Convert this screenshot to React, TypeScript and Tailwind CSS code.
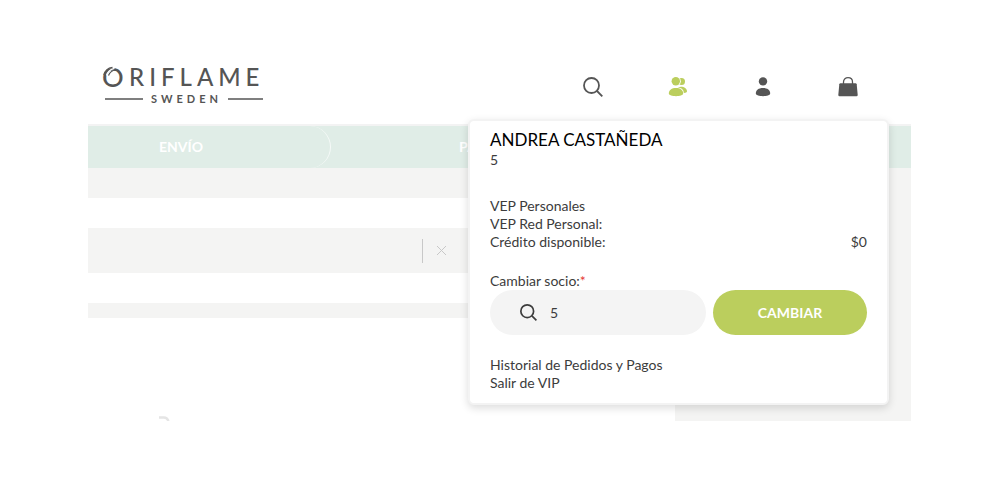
import React from "react";

function Logo() {
  return (
    <a href="#inicio" aria-label="Oriflame Sweden" className="block">
      <svg width="164" height="40" viewBox="0 0 164 40" className="overflow-visible fill-[#555555] font-['Lato',sans-serif]">
        <text x="-1" y="20" className="text-[27px] font-medium">O</text>
        <path d="M.8 8C2 3.500 5 .8 9.500 .3" fill="none" stroke="#555555" strokeWidth="1.200" />
        <path d="M3.500 8.500C4.500 4.500 7 2.300 11.500 1.300" fill="none" stroke="#fff" strokeWidth="1.200" />
        <path d="M5.500 8.500C6.500 5.500 9 3.500 12.500 3" fill="none" stroke="#555555" strokeWidth="1.200" />
        <text x="26" y="19" className="text-2xl font-medium tracking-[5px]">RIFLAME</text>
        <path d="M2 32H40M125 32H160" stroke="#555555" strokeWidth="1.500" />
        <text x="48" y="36" className="text-[11px] font-bold tracking-[4px]">SWEDEN</text>
      </svg>
    </a>
  );
}

function SearchIcon({ className }: { className: string }) {
  return (
    <svg viewBox="0 0 20 20" className={className} fill="none" stroke="currentColor" aria-hidden="true">
      <circle cx="8.500" cy="8.500" r="7.500" />
      <path d="M14 14L19.300 19.300" />
    </svg>
  );
}

function Header() {
  return (
    <header className="flex h-[69px] items-start border-b-2 border-[#f3f3f3] pl-[15px] pt-[10px]">
      <Logo />
      <nav aria-label="Cuenta" className="ml-auto mr-[53px] flex pt-[10px] text-[#555555]">
        <button aria-label="Buscar" className="w-5">
          <SearchIcon className="size-5 stroke-[1.8]" />
        </button>
        <button aria-label="Cambiar socio" className="ml-[65px] w-5 text-[#bbce5d]">
          <svg width="20" height="20" viewBox="0 0 20 20" fill="currentColor" aria-hidden="true">
            <circle cx="13.500" cy="4.500" r="3.500" />
            <path d="M10 10.500C14 8.500 19 11 19 14.500C19 15.800 16.500 16 14 16Z" />
            <circle cx="7.800" cy="4.200" r="5" fill="#fff" />
            <circle cx="7.800" cy="4.200" r="4.200" />
            <path d="M.8 16.500C.8 13 3.800 11 8 11S15.200 13 15.200 16.500C15.200 20 .8 20 .8 16.500Z" fill="#fff" stroke="#fff" strokeWidth="1.400" />
            <path d="M.8 16.500C.8 13 3.800 11 8 11S15.200 13 15.200 16.500C15.200 20 .8 20 .8 16.500Z" />
          </svg>
        </button>
        <button aria-label="Mi cuenta" className="ml-[65px] w-5">
          <svg width="20" height="20" viewBox="0 0 20 20" fill="currentColor" aria-hidden="true">
            <circle cx="10" cy="4.400" r="4.200" />
            <path d="M2.800 16.500C2.800 13.200 5.500 11 10 11S17.200 13.200 17.200 16.500C17.200 20 2.800 20 2.800 16.500Z" />
          </svg>
        </button>
        <button aria-label="Bolsa" className="ml-[65px] w-5">
          <svg width="20" height="20" viewBox="0 0 20 20" fill="currentColor" aria-hidden="true">
            <path d="M5.500 7V5C5.500-.8 14.500-.8 14.500 5V7" fill="none" stroke="currentColor" strokeWidth="1.300" />
            <path d="M2.500 6.200H17.500Q18.500 6.200 18.700 7.200L19.700 18Q19.700 19.200 18.500 19.200H1.500Q.3 19.200 .3 18L1.300 7.200Q1.500 6.200 2.500 6.200Z" />
          </svg>
        </button>
      </nav>
    </header>
  );
}

function AccountMenu() {
  return (
    <section
      aria-label="Cuenta de socio"
      className="absolute right-[22px] top-[62px] w-[421px] rounded-md border-2 border-[#f3f3f3] bg-white px-5 pb-[11px] pt-2 text-sm leading-[18px] text-[#3c3c3c] shadow-[0_3px_8px_rgba(0,0,0,0.14)]"
    >
      <h2 className="text-[17px] leading-[22px] text-black">ANDREA CASTAÑEDA</h2>
      <p>5</p>
      <dl className="mt-7">
        <div className="flex justify-between"><dt>VEP Personales</dt><dd /></div>
        <div className="flex justify-between"><dt>VEP Red Personal:</dt><dd /></div>
        <div className="flex justify-between"><dt>Crédito disponible:</dt><dd>$0</dd></div>
      </dl>
      <form className="mt-[21px]" onSubmit={(e) => e.preventDefault()}>
        <label htmlFor="socio" className="block">
          Cambiar socio:<span className="text-[#e53935]">*</span>
        </label>
        <div className="flex gap-[7px]">
          <div className="flex h-[45px] min-w-0 flex-1 items-center gap-[13px] rounded-full bg-[#f4f4f4] pl-[30px] pr-5">
            <SearchIcon className="size-[17px] shrink-0 stroke-2" />
            <input id="socio" defaultValue="5" className="min-w-0 flex-1 bg-transparent outline-none" />
          </div>
          <button className="h-[45px] w-[154px] rounded-full bg-[#bbce5d] font-bold text-white">CAMBIAR</button>
        </div>
      </form>
      <ul className="mt-[21px]">
        <li><a href="#historial">Historial de Pedidos y Pagos</a></li>
        <li><a href="#salir">Salir de VIP</a></li>
      </ul>
    </section>
  );
}

export default function App() {
  return (
    <div className="bg-white pb-[57px] pl-[88px] pr-[89px] pt-[57px] font-['Lato',sans-serif]">
      <div className="relative">
        <Header />
        <ol className="flex h-[42px] bg-[#e0ede7] text-sm font-bold leading-[42px] text-white">
          <li className="w-[243px] rounded-r-full border-r border-white/70 pl-[71px]">ENVÍO</li>
          <li className="pl-32">PA</li>
        </ol>
        <main className="flex">
          <div className="flex min-w-0 flex-1 flex-col">
            <div className="h-[30px] bg-[#f4f4f3]" />
            <div className="mt-[30px] flex h-[45px] items-center bg-[#f4f4f3]">
              <div className="ml-[334px] h-6 w-px bg-[#c8c8c8]" />
              <button aria-label="Quitar" className="ml-[13px]">
                <svg width="11" height="11" viewBox="0 0 11 11" stroke="#c8c8c8" aria-hidden="true">
                  <path d="M1 1L10 10M10 1L1 10" />
                </svg>
              </button>
            </div>
            <div className="mt-[30px] h-[15px] bg-[#f4f4f3]" />
            <svg width="12" height="5" viewBox="0 0 12 5" className="ml-[70px] mt-auto" fill="none" stroke="#e5e5e5" strokeWidth="2.500" aria-hidden="true">
              <path d="M1 1.500H6Q9 1.500 10.500 5" />
            </svg>
          </div>
          <aside className="h-[253px] w-[236px] bg-[#f4f4f3]" />
        </main>
        <AccountMenu />
      </div>
    </div>
  );
}
